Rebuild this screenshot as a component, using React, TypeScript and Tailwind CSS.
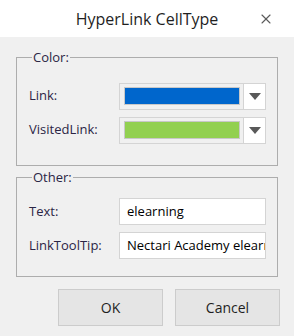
import { X } from 'lucide-react'

function ColorPicker({ color }: { color: string }) {
  return (
    <div className="flex h-[27px] w-[147px] border border-[#d4d4d4] bg-[#f0f0f0]">
      <div className="flex flex-1 items-center pl-[4px] pr-[3px]">
        <div className="h-[18px] w-full border border-[#c8c8c8]" style={{ backgroundColor: color }} />
      </div>
      <div className="flex w-[22px] items-center justify-center border-l border-[#d4d4d4] bg-white">
        <svg width="12" height="7" viewBox="0 0 12 7">
          <polygon points="0,0 12,0 6,7" fill="#595959" />
        </svg>
      </div>
    </div>
  )
}

function Row({ label, children }: { label: string; children: React.ReactNode }) {
  return (
    <div className="flex items-center justify-between">
      <span className="text-[13px] text-[#2b2545]">{label}</span>
      {children}
    </div>
  )
}

export default function App() {
  return (
    <div className="flex h-[336px] w-[294px] flex-col bg-[#f0f0f0] font-['Open_Sans',sans-serif]">
      <div className="relative flex h-[37px] items-center justify-center bg-white">
        <h1 className="text-[16px] font-medium text-[#1f1f1f]">HyperLink CellType</h1>
        <button className="absolute right-[20px] top-[11px] text-[#5a5a5a]">
          <X size={16} strokeWidth={1.6} />
        </button>
      </div>

      <div className="flex flex-col px-[16px] pt-[11px]">
        <fieldset className="w-[262px] border border-[#adadad] pb-[21px] pl-[12px] pr-[11px] pt-[15px]">
          <legend className="ml-[3px] px-[1px] text-[13px] text-[#2b2545]">Color:</legend>
          <div className="flex flex-col gap-[7px]">
            <Row label="Link:">
              <ColorPicker color="#0066cc" />
            </Row>
            <Row label="VisitedLink:">
              <ColorPicker color="#92d050" />
            </Row>
          </div>
        </fieldset>

        <fieldset className="mt-[2px] w-[262px] border border-[#adadad] pb-[17px] pl-[12px] pr-[11px] pt-[11px]">
          <legend className="ml-[3px] px-[1px] text-[13px] text-[#2b2545]">Other:</legend>
          <div className="flex flex-col gap-[7px]">
            <Row label="Text:">
              <div className="flex h-[27px] w-[147px] items-center overflow-hidden whitespace-nowrap border border-[#d4d4d4] bg-white pl-[7px] text-[13px] text-black">
                elearning
              </div>
            </Row>
            <Row label="LinkToolTip:">
              <div className="flex h-[27px] w-[147px] items-center overflow-hidden whitespace-nowrap border border-[#d4d4d4] bg-white pl-[7px] text-[13px] text-black">
                Nectari Academy elearning
              </div>
            </Row>
          </div>
        </fieldset>

        <div className="mt-[12px] flex justify-end gap-[12px]">
          <button className="h-[37px] w-[105px] border border-[#cccccc] bg-[#e5e5e5] text-[14px] text-[#1f1f1f]">OK</button>
          <button className="mr-[-2px] h-[37px] w-[105px] border border-[#cccccc] bg-[#e5e5e5] text-[14px] text-[#1f1f1f]">Cancel</button>
        </div>
      </div>
    </div>
  )
}
